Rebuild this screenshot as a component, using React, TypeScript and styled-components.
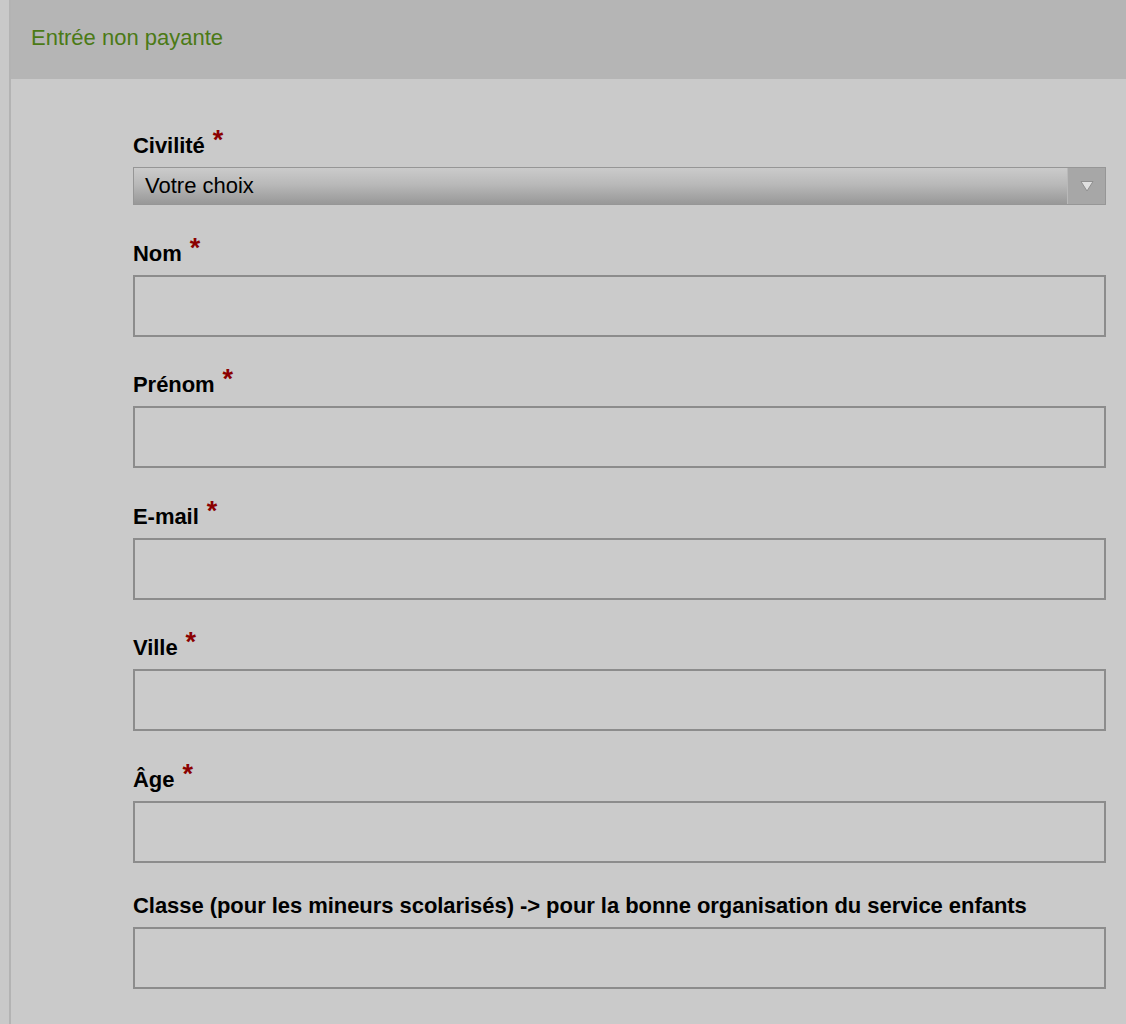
import styled, { createGlobalStyle } from 'styled-components'

const GlobalStyle = createGlobalStyle`
  html, body {
    margin: 0;
    padding: 0;
    background: #c9c9c9;
    font-family: "Liberation Sans", Arial, sans-serif;
  }

  #root {
    min-height: 100vh;
  }
`

const Page = styled.div`
  min-height: 100vh;
  padding-left: 9px;
  box-sizing: border-box;
  display: flex;
`

const Panel = styled.div`
  flex-grow: 1;
  border-left: 2px solid #b3b3b3;
  background: #cacaca;
  display: flex;
  flex-direction: column;
`

const Header = styled.div`
  background: #b5b5b5;
  height: 79px;
  box-sizing: border-box;
  padding: 25px 20px 0;
  font-size: 22px;
  line-height: 26px;
  color: #4b7a16;
`

const Form = styled.form`
  display: flex;
  flex-direction: column;
  gap: 29.6px;
  padding: 48px 20px 40px 122px;
`

const Field = styled.div`
  display: flex;
  flex-direction: column;
`

const Label = styled.label<{ $required?: boolean }>`
  display: block;
  font-size: 22px;
  line-height: 26px;
  font-weight: 700;
  color: #000;
  letter-spacing: -0.05px;
  padding-top: ${(props) => (props.$required ? '6px' : '0')};
  margin-bottom: 8px;
`

const Star = styled.span`
  color: #8b0000;
  font-size: 27px;
  line-height: 0;
  margin-left: 8px;
  position: relative;
  top: -4px;
`

const SelectBox = styled.div`
  display: flex;
  height: 38px;
  box-sizing: border-box;
  border: 1px solid #969696;
  background: linear-gradient(to bottom, #cbcbcb 0%, #b9b9b9 45%, #989898 100%);
`

const SelectValue = styled.span`
  flex-grow: 1;
  display: flex;
  align-items: center;
  padding-left: 11px;
  font-size: 22px;
  line-height: 26px;
  color: #000;
`

const ArrowBox = styled.span`
  width: 37px;
  display: flex;
  align-items: center;
  justify-content: center;
  background: #a7a7a7;
  border-left: 1px solid #b9b9b9;
`

const TextInput = styled.input`
  display: block;
  width: 100%;
  height: 62px;
  box-sizing: border-box;
  margin: 0;
  border: 2px solid #8c8c8c;
  background: #cbcbcb;
  font-family: "Liberation Sans", Arial, sans-serif;
  font-size: 22px;
  padding: 0 10px;
  outline: none;
`

const fields = [
  { label: 'Nom', required: true },
  { label: 'Prénom', required: true },
  { label: 'E-mail', required: true },
  { label: 'Ville', required: true },
  { label: 'Âge', required: true },
  {
    label: 'Classe (pour les mineurs scolarisés) -> pour la bonne organisation du service enfants',
    required: false,
  },
]

const Arrow = () => (
  <svg width="14" height="12" viewBox="0 0 14 12">
    <path d="M1 1.5 L13 1.5 L7 11 Z" fill="#e0e0e0" stroke="#8a8a8a" strokeWidth="0.9" />
  </svg>
)

export default function App() {
  return (
    <Page>
      <GlobalStyle />
      <Panel>
        <Header>Entrée non payante</Header>
        <Form>
          <Field>
            <Label $required>
              Civilité<Star>*</Star>
            </Label>
            <SelectBox>
              <SelectValue>Votre choix</SelectValue>
              <ArrowBox>
                <Arrow />
              </ArrowBox>
            </SelectBox>
          </Field>
          {fields.map((f) => (
            <Field key={f.label}>
              <Label $required={f.required}>
                {f.label}
                {f.required && <Star>*</Star>}
              </Label>
              <TextInput type="text" />
            </Field>
          ))}
        </Form>
      </Panel>
    </Page>
  )
}
